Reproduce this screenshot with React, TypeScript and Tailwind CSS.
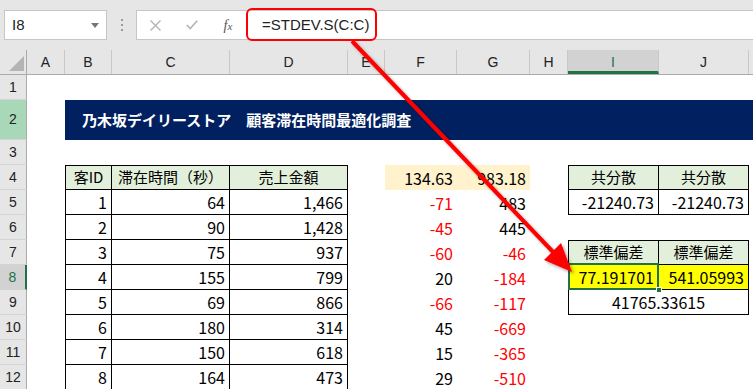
import React from "react";

const W = {
  rh: "w-[27px]",
  A: "w-[38px]",
  B: "w-[47px]",
  C: "w-[118px]",
  D: "w-[118px]",
  E: "w-[37px]",
  F: "w-[72px]",
  G: "w-[73px]",
  H: "w-[38px]",
  I: "w-[91px]",
  J: "w-[90px]",
};

function Cell({ w, className = "", children }: { w: string; className?: string; children?: React.ReactNode }) {
  return <div className={`${w} shrink-0 h-full box-border flex items-center ${className}`}>{children}</div>;
}

function RowHead({ n, state }: { n: number; state?: "sel" | "green" }) {
  const bg =
    state === "sel"
      ? "bg-[#d2d2d2] text-[#217346] border-r-2 border-r-[#217346]"
      : state === "green"
        ? "bg-[#a9d8b8] text-[#222] border-r border-r-[#ababab]"
        : "bg-[#e6e6e6] text-[#222] border-r border-r-[#ababab]";
  return (
    <Cell w={W.rh} className={`${bg} justify-center border-b border-b-[#d4d4d4] font-['Liberation_Sans',sans-serif] text-[14px]`}>
      {n}
    </Cell>
  );
}

const ids = [1, 2, 3, 4, 5, 6, 7, 8];
const times = [64, 90, 75, 155, 69, 180, 150, 164];
const sales = ["1,466", "1,428", "937", "799", "866", "314", "618", "473"];
const fVals = [-71, -45, -60, 20, -66, 45, 15, 29];
const gVals = [483, 445, -46, -184, -117, -669, -365, -510];

const num = "justify-end pr-[4px] text-[16px]";
const head = "justify-center text-[15px] bg-[#e2efda]";

function Signed({ v }: { v: number }) {
  return <span className={v < 0 ? "text-[#ff0000]" : "text-black"}>{v}</span>;
}

export default function App() {
  const colHeads: [string, string][] = [
    ["A", W.A],
    ["B", W.B],
    ["C", W.C],
    ["D", W.D],
    ["E", W.E],
    ["F", W.F],
    ["G", W.G],
    ["H", W.H],
    ["I", W.I],
    ["J", W.J],
  ];

  return (
    <div className="relative w-[753px] h-[389px] overflow-hidden bg-white font-['Noto_Sans_CJK_JP',sans-serif] text-black">
      {/* formula bar */}
      <div className="h-[50px] bg-[#e6e6e6] flex items-start pt-[10px]">
        <div className="ml-[4px] w-[103px] h-[30px] bg-white border border-[#c6c6c6] flex items-center justify-between pl-[7px] pr-[7px] font-['Liberation_Sans',sans-serif] text-[15px] text-[#222]">
          <span>I8</span>
          <svg width="8" height="5" viewBox="0 0 8 5">
            <polygon points="0,0 8,0 4,5" fill="#777" />
          </svg>
        </div>
        <div className="w-[29px] h-[30px] flex flex-col items-center justify-center gap-[3px]">
          <div className="w-[2px] h-[2px] bg-[#9a9a9a]" />
          <div className="w-[2px] h-[2px] bg-[#9a9a9a]" />
          <div className="w-[2px] h-[2px] bg-[#9a9a9a]" />
        </div>
        <div className="flex-1 h-[30px] bg-white border border-[#c6c6c6] border-r-0 flex items-center">
          <div className="w-[37px] flex justify-center">
            <svg width="11" height="11" viewBox="0 0 11 11">
              <path d="M0.5 0.5 L10.5 10.5 M10.5 0.5 L0.5 10.5" stroke="#b3b3b3" strokeWidth="1.4" />
            </svg>
          </div>
          <div className="w-[36px] flex justify-center">
            <svg width="12" height="10" viewBox="0 0 12 10">
              <path d="M0.8 5 L4.2 8.6 L11.2 0.8" stroke="#b3b3b3" strokeWidth="1.6" fill="none" />
            </svg>
          </div>
          <div className="w-[36px] flex justify-center font-['Liberation_Serif',serif] italic text-[14px] text-[#555]">
            <span>
              f<span className="text-[11px]">x</span>
            </span>
          </div>
          <div className="pl-[16px] font-['Liberation_Sans',sans-serif] text-[15px] text-[#222]">=STDEV.S(C:C)</div>
        </div>
      </div>

      {/* column headers */}
      <div className="flex h-[25px] bg-[#e6e6e6] border-b border-[#ababab] font-['Liberation_Sans',sans-serif] text-[14px] text-[#222]">
        <Cell w={W.rh} className="border-r border-[#ababab] relative">
          <svg width="27" height="24" viewBox="0 0 27 24" className="absolute left-0 top-0">
            <polygon points="24,6 24,21 9,21" fill="#b4b4b4" />
          </svg>
        </Cell>
        {colHeads.map(([l, w]) =>
          l === "I" ? (
            <Cell key={l} w={w} className="justify-center bg-[#d2d2d2] border-r border-[#c8c8c8] border-b-[3px] border-b-[#217346] text-[#217346] pt-[3px]">
              {l}
            </Cell>
          ) : (
            <Cell key={l} w={w} className="justify-center border-r border-[#c8c8c8]">
              {l}
            </Cell>
          )
        )}
        <div className="flex-1" />
      </div>

      {/* row 1 */}
      <div className="flex h-[25px]">
        <RowHead n={1} />
      </div>

      {/* row 2 */}
      <div className="flex h-[40px]">
        <RowHead n={2} state="green" />
        <Cell w={W.A} />
        <div className="flex-1 h-full bg-[#002060] flex items-center pl-[17px] text-white font-bold text-[15px]">
          乃木坂デイリーストア　顧客滞在時間最適化調査
        </div>
      </div>

      {/* row 3 */}
      <div className="flex h-[25px]">
        <RowHead n={3} />
      </div>

      {/* row 4 */}
      <div className="flex h-[25px]">
        <RowHead n={4} />
        <Cell w={W.A} />
        <Cell w={W.B} className={`${head} border border-black`}>客ID</Cell>
        <Cell w={W.C} className={`${head} border-t border-r border-b border-black`}>滞在時間（秒）</Cell>
        <Cell w={W.D} className={`${head} border-t border-r border-b border-black`}>売上金額</Cell>
        <Cell w={W.E} />
        <Cell w={W.F} className={`${num} bg-[#fff2cc]`}>134.63</Cell>
        <Cell w={W.G} className={`${num} bg-[#fff2cc]`}>983.18</Cell>
        <Cell w={W.H} />
        <Cell w={W.I} className={`${head} border border-black`}>共分散</Cell>
        <Cell w={W.J} className={`${head} border-t border-r border-b border-black`}>共分散</Cell>
      </div>

      {/* rows 5-12 */}
      {ids.map((id, i) => {
        const r = i + 5;
        return (
          <div key={r} className="flex h-[25px]">
            <RowHead n={r} state={r === 8 ? "sel" : undefined} />
            <Cell w={W.A} />
            <Cell w={W.B} className={`${num} border-l border-r border-b border-black`}>{id}</Cell>
            <Cell w={W.C} className={`${num} border-r border-b border-black`}>{times[i]}</Cell>
            <Cell w={W.D} className={`${num} border-r border-b border-black`}>{sales[i]}</Cell>
            <Cell w={W.E} />
            <Cell w={W.F} className={num}>
              <Signed v={fVals[i]} />
            </Cell>
            <Cell w={W.G} className={num}>
              <Signed v={gVals[i]} />
            </Cell>
            <Cell w={W.H} />
            {r === 5 && (
              <>
                <Cell w={W.I} className={`${num} border-l border-r border-b border-black`}>-21240.73</Cell>
                <Cell w={W.J} className={`${num} border-r border-b border-black`}>-21240.73</Cell>
              </>
            )}
            {r === 7 && (
              <>
                <Cell w={W.I} className={`${head} border border-black`}>標準偏差</Cell>
                <Cell w={W.J} className={`${head} border-t border-r border-b border-black`}>標準偏差</Cell>
              </>
            )}
            {r === 8 && (
              <>
                <Cell w={W.I} className={`${num} relative bg-[#ffff00] border-l border-r border-b border-black`}>
                  77.191701
                  <div className="absolute z-10 -left-px -top-[2px] -right-px -bottom-px border-2 border-[#217346]" />
                  <div className="absolute z-10 -right-[4px] -bottom-[4px] w-[6px] h-[6px] bg-[#217346] border border-white" />
                </Cell>
                <Cell w={W.J} className={`${num} bg-[#ffff00] border-r border-b border-black`}>541.05993</Cell>
              </>
            )}
            {r === 9 && (
              <div className="w-[181px] shrink-0 h-full box-border flex items-center justify-center text-[16px] border-l border-r border-b border-black">
                41765.33615
              </div>
            )}
          </div>
        );
      })}

      {/* red highlight and arrow */}
      <div className="absolute left-[246px] top-[8px] w-[131px] h-[33px] border-2 border-[#ff0000] rounded-[6px]" />
      <svg className="absolute left-0 top-0 z-20 pointer-events-none" width="753" height="389" viewBox="0 0 753 389">
        <defs>
          <filter id="sh" x="-20%" y="-20%" width="140%" height="140%">
            <feDropShadow dx="2" dy="2" stdDeviation="1.5" floodColor="#000" floodOpacity="0.35" />
          </filter>
        </defs>
        <g filter="url(#sh)">
          <line x1="352" y1="41" x2="554" y2="253" stroke="#ff0000" strokeWidth="4" />
          <polygon points="572,272 544,260 561,243" fill="#ff0000" />
        </g>
      </svg>
    </div>
  );
}
